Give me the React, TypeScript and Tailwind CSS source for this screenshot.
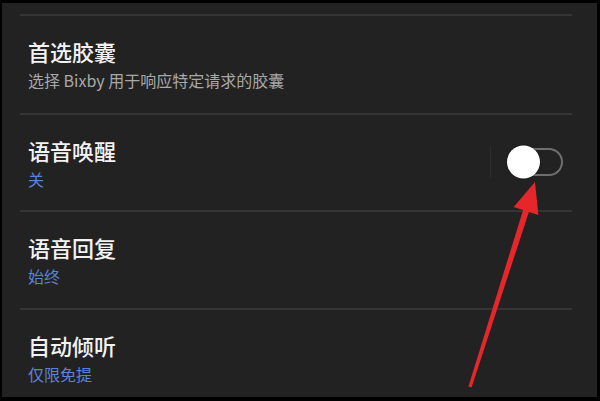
const FONT = { fontFamily: '"Noto Sans CJK SC", "Noto Sans", sans-serif' }

const rows = [
  { title: '首选胶囊', sub: '选择 Bixby 用于响应特定请求的胶囊', blue: false, h: 'h-[99px]' },
  { title: '语音唤醒', sub: '关', blue: true, h: 'h-[97px]', toggle: true },
  { title: '语音回复', sub: '始终', blue: true, h: 'h-[98px]' },
  { title: '自动倾听', sub: '仅限免提', blue: true, h: 'flex-1' },
]

function Toggle() {
  return (
    <div className="flex items-center">
      <div className="w-px h-[32px] bg-[#2e2e2e]" />
      <div className="relative ml-[16px] w-[56px] h-[28px] rounded-full border-2 border-[#6e6e6e]">
        <div className="absolute left-[-2px] top-1/2 -translate-y-1/2 w-[33px] h-[33px] rounded-full bg-white shadow-[0_0_2px_rgba(0,0,0,0.6)]" />
      </div>
    </div>
  )
}

export default function App() {
  return (
    <div className="w-[600px] h-[401px] bg-black pt-[3px] pl-[2px] pr-[3px] pb-[4px]" style={FONT}>
      <div className="relative w-full h-full bg-[#222222] flex flex-col pt-[11px] overflow-hidden">
        {rows.map((r) => (
          <div key={r.title} className={`${r.h} flex flex-col`}>
            <div className="ml-[18px] mr-[25px] h-[2px] bg-[#353535]" />
            <div className="flex-1 flex items-start justify-between pl-[26px] pr-[34px]">
              <div className="pt-[21px]">
                <div className="text-[22px] leading-[28px] font-medium text-[#f2f2f2]">{r.title}</div>
                <div className={`mt-[5px] text-[16px] leading-[20px] ${r.blue ? 'text-[#5b82d6]' : 'text-[#a8a8a8]'}`}>{r.sub}</div>
              </div>
              {r.toggle && (
                <div className="self-center -mt-[2px]">
                  <Toggle />
                </div>
              )}
            </div>
          </div>
        ))}
        <svg className="absolute left-[-2px] top-[-3px] pointer-events-none" width="600" height="401" viewBox="0 0 600 401">
          <polygon
            points="535,182 538.4,214.9 528.9,211.9 471.6,387.5 468.4,386.5 523.1,210.1 513.6,207"
            fill="#e5262b"
          />
        </svg>
      </div>
    </div>
  )
}
